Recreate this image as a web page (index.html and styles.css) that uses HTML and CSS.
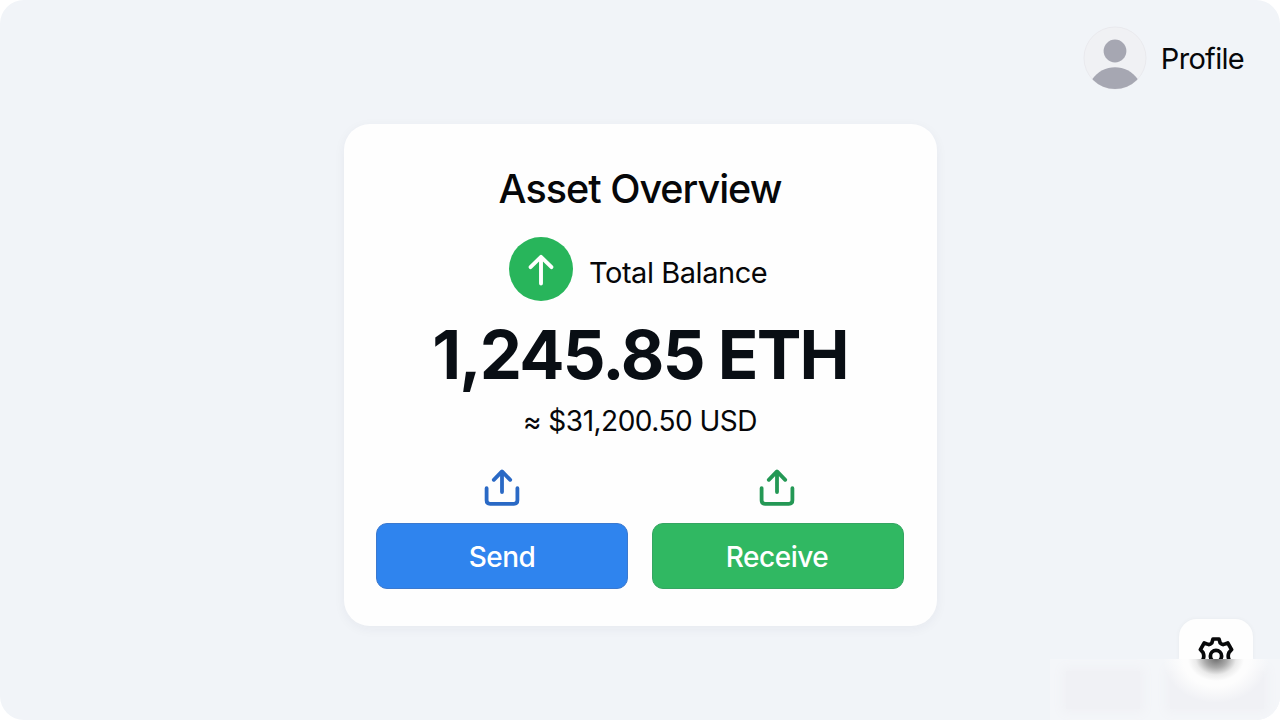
FILE: index.html
```html
<!DOCTYPE html>
<html lang="en">
<head>
    <meta charset="UTF-8">
    <meta name="viewport" content="width=device-width, initial-scale=1.0">
    <title>Asset Overview</title>
    <link rel="stylesheet" href="styles.css">
</head>
<body>
    <div class="page">
        <header class="header">
            <svg class="avatar" viewBox="0 0 64 64">
                <clipPath id="avatarClip"><circle cx="32" cy="32" r="31"/></clipPath>
                <circle cx="32" cy="32" r="31" fill="#f0f1f4" stroke="#e9e9ed"/>
                <circle cx="32" cy="25" r="11.4" fill="#a6a7b2"/>
                <path clip-path="url(#avatarClip)" d="M9 53.5 C20 37 44 37 55 53.5 L55 64 L9 64 Z" fill="#a6a7b2"/>
            </svg>
            <span class="profile">Profile</span>
        </header>

        <main class="card">
            <h1>Asset Overview</h1>
            <div class="balance">
                <div class="badge">
                    <svg width="64" height="64" viewBox="0 0 64 64">
                        <path d="M32 46.5V20.5M21.5 30.2L32 19.9L42.5 30.2" stroke="#fff" stroke-width="3.9" stroke-linecap="round" stroke-linejoin="round"/>
                    </svg>
                </div>
                <span class="label">Total Balance</span>
            </div>
            <div class="amount">1,245.85 ETH</div>
            <div class="usd">≈ $31,200.50 USD</div>
            <div class="actions">
                <div class="action send">
                    <svg width="40" height="40" viewBox="0 0 40 40">
                        <path d="M20 24V4M11.8 11.8L20 3.4L28.2 11.8M4.6 20.2V32.3Q4.6 35.8 8.1 35.8H31.9Q35.4 35.8 35.4 32.3V20.2"/>
                    </svg>
                    <button>Send</button>
                </div>
                <div class="action receive">
                    <svg width="40" height="40" viewBox="0 0 40 40">
                        <path d="M20 24V4M11.8 11.8L20 3.4L28.2 11.8M4.6 20.2V32.3Q4.6 35.8 8.1 35.8H31.9Q35.4 35.8 35.4 32.3V20.2"/>
                    </svg>
                    <button>Receive</button>
                </div>
            </div>
        </main>

        <div class="settings">
            <svg width="44" height="44" viewBox="-22 -22 44 44">
                <path d="M-3 -17H3L4.2 -13Q6.5 -10.6 9 -12L11.8 -13L15.6 -6.4L13 -3.6Q11.4 0 13 3.6L15.6 6.4L11.8 13L9 12Q6.5 10.6 4.2 13L3 17H-3L-4.2 13Q-6.5 10.6 -9 12L-11.8 13L-15.6 6.4L-13 3.6Q-11.4 0 -13 -3.6L-15.6 -6.4L-11.8 -13L-9 -12Q-6.5 -10.6 -4.2 -13Z"/>
                <circle r="5.6"/>
            </svg>
        </div>
        <div class="haze">
            <div class="smudge"></div>
            <div class="smudge"></div>
            <div class="glow"></div>
            <div class="shade"></div>
        </div>
    </div>
</body>
</html>
```
FILE: styles.css
```css
body {
    margin: 0;
    background-color: #fff;
    font-family: Inter, sans-serif;
    color: #060709;
}
.page {
    position: relative;
    box-sizing: border-box;
    width: 1280px;
    height: 720px;
    padding-top: 26px;
    overflow: hidden;
    border-radius: 24px;
    background-color: #f1f4f8;
}
.header {
    display: flex;
    align-items: center;
    justify-content: flex-end;
    height: 64px;
    padding-right: 36px;
    gap: 14px;
}
.avatar {
    width: 64px;
    height: 64px;
}
.profile {
    font-size: 29px;
    letter-spacing: -0.7px;
    line-height: 64px;
    padding-top: 2px;
}
.card {
    box-sizing: border-box;
    width: 593px;
    height: 502px;
    margin: 34px 0 0 344px;
    padding: 41px 33px 0 32px;
    border-radius: 26px;
    background-color: #fefefe;
    box-shadow: 0 3px 12px rgba(40, 45, 80, 0.05);
}
h1 {
    margin: 0;
    font-size: 39.5px;
    font-weight: 550;
    line-height: 48px;
    text-align: center;
    letter-spacing: -1px;
    white-space: nowrap;
}
.balance {
    display: flex;
    align-items: center;
    height: 64px;
    margin-top: 24px;
    padding-left: 133px;
    gap: 16px;
}
.badge {
    height: 64px;
    border-radius: 50%;
    background-color: #28b55b;
}
.badge svg {
    display: block;
    fill: none;
}
.label {
    font-size: 29px;
    letter-spacing: -0.45px;
    padding-top: 6px;
    white-space: nowrap;
}
.amount {
    margin-top: 14px;
    font-size: 67px;
    font-weight: 700;
    line-height: 80px;
    letter-spacing: -1.8px;
    text-align: center;
    white-space: nowrap;
    color: #090e14;
}
.usd {
    margin-top: 8px;
    font-size: 28px;
    line-height: 36px;
    letter-spacing: -0.5px;
    text-align: center;
    white-space: nowrap;
}
.actions {
    display: flex;
    justify-content: space-between;
    margin-top: 29px;
}
.action {
    display: flex;
    flex-direction: column;
    align-items: center;
    gap: 15px;
    width: 252px;
}
.action svg {
    fill: none;
    stroke-width: 3.8;
    stroke-linecap: round;
    stroke-linejoin: round;
}
.receive svg {
    margin-right: 2px;
}
.action button {
    width: 252px;
    height: 66px;
    padding: 2px 0 0;
    border-radius: 11px;
    font-family: Inter, sans-serif;
    font-size: 28px;
    font-weight: 550;
    letter-spacing: -0.5px;
    color: #fff;
}
.send svg {
    stroke: #2a69c5;
}
.send button {
    border: 1px solid #3b79cf;
    background-color: #2f84ee;
}
.receive svg {
    stroke: #249855;
}
.receive button {
    padding-right: 2px;
    border: 1px solid #35a562;
    background-color: #30b862;
}
.settings {
    position: absolute;
    left: 1179px;
    top: 619px;
    width: 74px;
    height: 40px;
    overflow: hidden;
    border-radius: 18px 18px 0 0;
    background-color: #fefefe;
    box-shadow: 0 0 4px rgba(90, 80, 80, 0.06);
}
.settings svg {
    display: block;
    margin: 15px 0 0 15px;
    fill: none;
    stroke: #08090a;
    stroke-width: 3.7;
    stroke-linejoin: round;
}
/* frosted strip under the settings button */
.haze {
    position: absolute;
    left: 1050px;
    top: 659px;
    display: flex;
    box-sizing: border-box;
    width: 230px;
    height: 61px;
    padding: 12px 16px;
    gap: 30px;
    overflow: hidden;
    background-color: #f4f6f9;
}
.smudge {
    width: 78px;
    height: 38px;
    background-color: #f0f1f5;
    box-shadow: 0 0 10px 4px #f0f1f5;
}
.smudge + .smudge {
    width: 100px;
}
.glow {
    position: absolute;
    left: 113px;
    top: -44px;
    width: 106px;
    height: 88px;
    background: radial-gradient(closest-side, #fdfdfd 62%, rgba(253, 253, 253, 0));
}
.shade {
    position: absolute;
    left: 138px;
    top: -22px;
    width: 56px;
    height: 44px;
    background: radial-gradient(closest-side, rgba(105, 105, 105, 0.95), rgba(135, 135, 135, 0.7) 40%, rgba(200, 200, 200, 0.35) 72%, rgba(255, 255, 255, 0));
}
```
